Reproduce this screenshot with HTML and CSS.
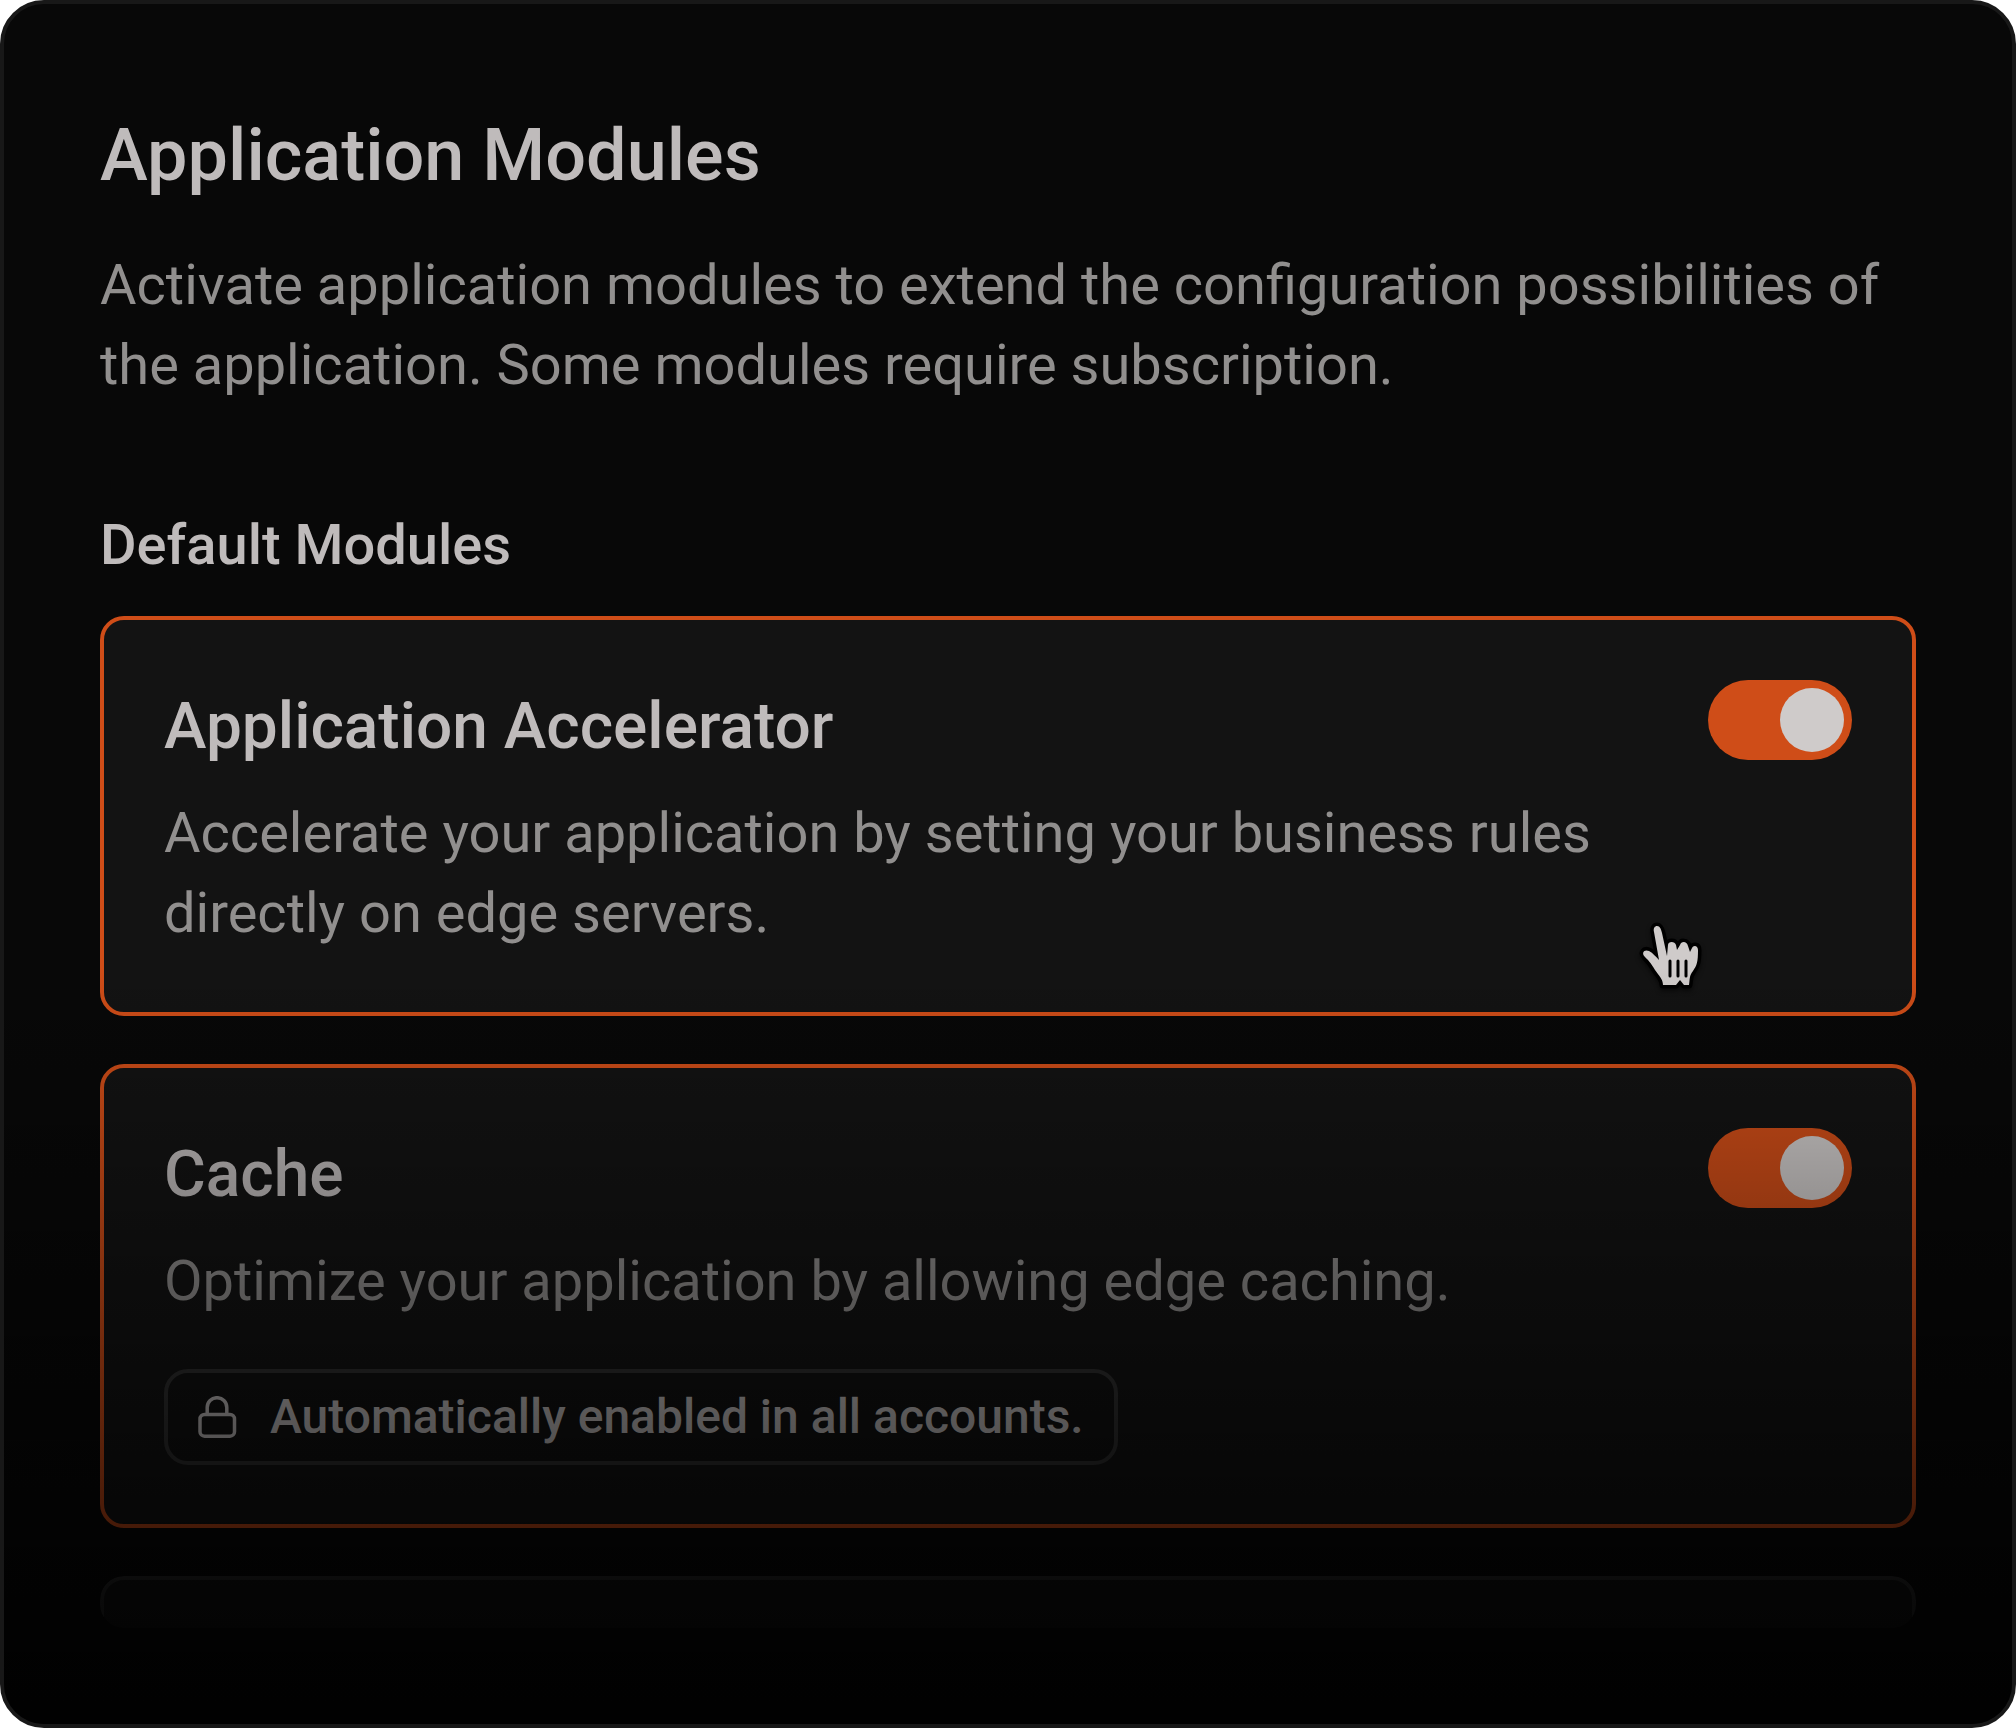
FILE: index.html
```html
<!DOCTYPE html>
<html lang="en">
<head>
  <meta charset="UTF-8">
  <meta name="viewport" content="width=device-width, initial-scale=1.0">
  <title>Application Modules</title>
  <link rel="stylesheet" href="styles.css">
</head>
<body>
  <main class="panel">
    <h1>Application Modules</h1>
    <p class="intro">Activate application modules to extend the configuration possibilities of the application. Some modules require subscription.</p>

    <h2>Default Modules</h2>
    <div class="modules">
      <section class="card active">
        <div class="card-text">
          <h3 id="accelerator">Application Accelerator</h3>
          <p>Accelerate your application by setting your business rules directly on edge servers.</p>
        </div>
        <input type="checkbox" role="switch" class="switch" aria-labelledby="accelerator" checked>
        <!-- Hand pointer -->
        <svg class="pointer" viewBox="0 0 110 110" aria-hidden="true">
          <path d="M43 85 C43 79 39 76 35 70 C31 63 28 60 25 57 C21 53 24 49 29 51 C33 53 36 57 39 60 L34 32 C33 28 35 26 37 26 C40 26 41 29 42 33 L47 56 L48 45 C48 41 55 41 56 45 L57 50 L60 45 C61 41 67 41 68 46 L70 52 L72 48 C73 45 78 45 78 50 C78 62 77 65 73 71 C69 76 70 79 69 85 L64 85 L60 80 L56 85 Z"/>
          <path class="pointer-lines" d="M50 61V76M58 61V76M66 61V76"/>
        </svg>
      </section>

      <section class="card active">
        <div class="card-text">
          <h3 id="cache">Cache</h3>
          <p>Optimize your application by allowing edge caching.</p>
          <div class="tag">
            <svg class="lock" viewBox="0 0 42 42" aria-hidden="true">
              <rect x="2" y="18.5" width="34.5" height="21.7" rx="4.5"/>
              <path d="M9.2 18.5V11.5a9.8 9.8 0 0 1 19.6 0V18.5"/>
            </svg>
            <span>Automatically enabled in all accounts.</span>
          </div>
        </div>
        <input type="checkbox" role="switch" class="switch" aria-labelledby="cache" checked>
      </section>

      <div class="next">
        <div class="card"></div>
      </div>
    </div>
  </main>
</body>
</html>
```

FILE: styles.css
```css
* {
  box-sizing: border-box;
}
body {
  margin: 0;
  background-color: #fff;
  font-family: Roboto, "Liberation Sans", sans-serif;
}
h1, h2, h3, p {
  margin: 0;
}
h1, h2, h3 {
  font-weight: 500;
  color: #bfbbbb;
}
.panel {
  position: relative;
  display: flex;
  flex-direction: column;
  min-height: 100vh;
  padding: 96px;
  border: 4px solid #181818;
  border-radius: 44px;
  background-color: #080808;
  overflow: hidden;
}
/* Fade to black towards the bottom */
.panel::after {
  content: "";
  position: absolute;
  inset: 0;
  background: linear-gradient(transparent 56%, #000 105%);
  pointer-events: none;
}
h1 {
  font-size: 72px;
  line-height: 112px;
  margin-bottom: 33px;
}
p {
  font-size: 56px;
  line-height: 80px;
  color: #918f8e;
}
.intro {
  margin-bottom: 100px;
}
h2 {
  font-size: 56px;
  line-height: 80px;
  margin-bottom: 31px;
}
.modules {
  display: flex;
  flex-direction: column;
  flex: 1;
  gap: 48px;
}
.card {
  position: relative;
  display: flex;
  justify-content: space-between;
  align-items: flex-start;
  gap: 96px;
  padding: 60px 60px 59px;
  border: 4px solid #2a2a2a;
  border-radius: 24px;
  background-color: #131313;
}
.card.active {
  border-color: #cf4d18;
}
h3 {
  font-size: 64px;
  line-height: 94px;
  margin-bottom: 19px;
}
.switch {
  appearance: none;
  display: flex;
  justify-content: flex-end;
  flex-shrink: 0;
  width: 144px;
  height: 80px;
  margin: 0;
  padding: 8px;
  border-radius: 40px;
  background-color: #cf4d18;
  cursor: pointer;
}
.switch::before {
  content: "";
  width: 64px;
  height: 64px;
  border-radius: 50%;
  background-color: #cfcbca;
}
.switch:not(:checked) {
  justify-content: flex-start;
  background-color: #333;
}
.tag {
  display: flex;
  align-items: center;
  gap: 30px;
  width: fit-content;
  margin-top: 48px;
  padding: 0 30px;
  border: 4px solid #303030;
  border-radius: 24px;
  background-color: #111;
  font-size: 48px;
  font-weight: 500;
  line-height: 88px;
  color: #bfbbbb;
}
.lock {
  width: 42px;
  height: 42px;
  fill: none;
  stroke: #bfbbbb;
  stroke-width: 3.5;
}
.pointer {
  position: absolute;
  right: 182px;
  bottom: 2px;
  width: 110px;
  height: 110px;
  fill: #cfcbca;
  stroke: #000;
  stroke-width: 7;
  stroke-linejoin: round;
  paint-order: stroke;
  filter: drop-shadow(0 3px 2px rgba(0,0,0,0.5));
}
.pointer-lines {
  stroke-width: 3;
  stroke-linecap: round;
}
.next {
  flex: 1 0 52px;
  border-radius: 24px;
  overflow: hidden;
}
.next .card {
  height: 200px;
}
```
